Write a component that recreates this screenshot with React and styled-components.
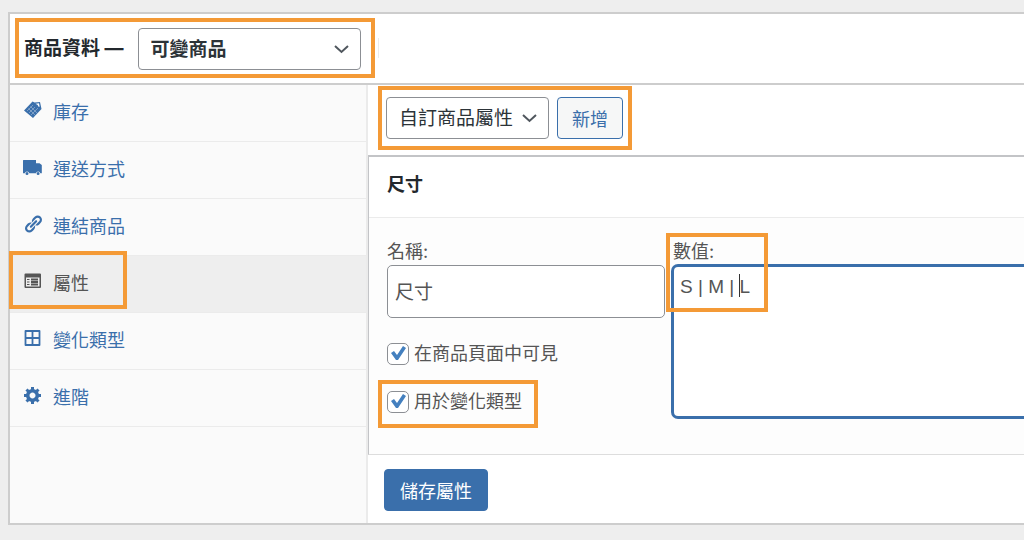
import React, { useState } from "react";
import styled, { createGlobalStyle } from "styled-components";

const COLORS = {
  page: "#eeeeee",
  border: "#cdcdcd",
  line: "#ebebeb",
  blue: "#3a6fab",
  text: "#2c3338",
  muted: "#555555",
  mark: "#f49a36",
};

const GlobalStyle = createGlobalStyle`
  * {
    box-sizing: border-box;
  }
  body {
    margin: 0;
    background-color: ${COLORS.page};
    color: ${COLORS.text};
    font-family: Inter, "Noto Sans CJK TC", sans-serif;
    font-size: 18px;
    line-height: 24px;
    overflow-x: hidden;
  }
  input, select, textarea, button {
    font-family: inherit;
    margin: 0;
  }
`;

const Page = styled.main`
  padding: 12px 0 16px 8px;
`;

const Panel = styled.section`
  border: 2px solid ${COLORS.border};
  border-right: none;
  background-color: #ffffff;
`;

const Header = styled.header`
  display: flex;
  align-items: center;
  gap: 3px;
  padding: 4px 5px 5px;
  border-bottom: 2px solid ${COLORS.border};
`;

const Divider = styled.span`
  width: 1px;
  height: 20px;
  background-color: ${COLORS.line};
`;

const Highlight = styled.div`
  display: flex;
  align-items: center;
  gap: ${(props) => props.$gap || "0"};
  padding: ${(props) => props.$pad};
  border: 4px solid ${COLORS.mark};
`;

// frame drawn over the content, takes no space
const Frame = styled.span`
  position: absolute;
  inset: ${(props) => props.$inset};
  width: ${(props) => props.$width};
  height: ${(props) => props.$height};
  border: 4px solid ${COLORS.mark};
  pointer-events: none;
`;

const TypeLabel = styled.label`
  font-size: 19px;
  font-weight: bold;
  color: #23282d;
  white-space: nowrap;
`;

const SelectBox = styled.div`
  position: relative;
  width: ${(props) => props.$width};
`;

const Select = styled.select`
  appearance: none;
  display: block;
  width: 100%;
  height: 42px;
  padding: 0 12px;
  border: 1px solid #8c8f94;
  border-radius: 4px;
  background-color: #ffffff;
  color: ${COLORS.text};
  font-size: 19px;
  font-weight: ${(props) => (props.$bold ? "bold" : "normal")};
`;

const Chevron = styled.svg`
  position: absolute;
  top: 16px;
  right: 12px;
  width: 15px;
  height: 10px;
  pointer-events: none;
`;

const Body = styled.div`
  display: grid;
  grid-template-columns: 358px minmax(0, 1fr);
`;

const Sidebar = styled.nav`
  background-color: #fafafa;
  border-right: 2px solid ${COLORS.line};
`;

const TabList = styled.ul`
  list-style: none;
  margin: 0;
  padding: 0;
`;

const Tab = styled.li`
  position: relative;
`;

const TabLink = styled.a`
  display: flex;
  align-items: center;
  gap: 10px;
  height: 57px;
  padding: 0 13px;
  border-bottom: 1px solid ${COLORS.line};
  background-color: ${(props) => (props.$active ? "#eeeeee" : "transparent")};
  color: ${(props) => (props.$active ? COLORS.muted : COLORS.blue)};
  text-decoration: none;
`;

const Icon = styled.svg`
  width: 20px;
  height: 20px;
  margin-bottom: 6px;
  flex: none;
`;

const Toolbar = styled.div`
  display: flex;
  padding: 1px 10px 5px;
`;

const AddButton = styled.button`
  height: 42px;
  padding: 0 14px;
  border: 1px solid ${COLORS.blue};
  border-radius: 4px;
  background-color: #f6f7f7;
  color: ${COLORS.blue};
  font-size: 18px;
`;

const Attribute = styled.section`
  border-top: 2px solid #c3c4c7;
  border-left: 1px solid #c3c4c7;
  border-bottom: 1px solid #dddddd;
  background-color: #fdfdfd;
`;

const Title = styled.h3`
  margin: 0;
  padding: 16px 18px 20px;
  border-bottom: 1px solid ${COLORS.line};
  background-color: #ffffff;
  color: #23282d;
  font-size: 18px;
  line-height: 24px;
`;

const Fields = styled.div`
  display: grid;
  grid-template-columns: 278px minmax(0, 1fr);
  gap: 6px;
  padding: 22px 0 17px 18px;
  color: ${COLORS.muted};
`;

const Column = styled.div`
  position: relative;
  display: flex;
  flex-direction: column;
`;

const NameInput = styled.input`
  width: 100%;
  height: 53px;
  margin: 1px 0 23px;
  padding: 0 7px 3px;
  border: 1px solid #8c8f94;
  border-radius: 5px;
  background-color: #ffffff;
  color: ${COLORS.muted};
  font-size: 19px;
`;

const ValueLabel = styled.label`
  padding-left: 2px;
`;

const ValueInput = styled.textarea`
  display: block;
  width: 100%;
  height: 155px;
  padding: 8px 6px;
  border: 3px solid ${COLORS.blue};
  border-right: none;
  border-radius: 7px 0 0 7px;
  outline: none;
  resize: none;
  background-color: #ffffff;
  color: ${COLORS.muted};
  font-family: "Liberation Sans", "Noto Sans CJK TC", sans-serif;
  font-size: 19px;
  line-height: 24px;
`;

const Caret = styled.span`
  position: absolute;
  top: 34px;
  left: 68px;
  width: 1px;
  height: 23px;
  background-color: #333333;
`;

const CheckRow = styled.label`
  position: relative;
  display: flex;
  align-items: center;
  gap: 5px;
  height: 26px;
  margin-bottom: 22px;
`;

const Checkbox = styled.input`
  appearance: none;
  width: 22px;
  height: 22px;
  border: 1px solid #8c8f94;
  border-radius: 5px;
  background-color: #ffffff;
`;

const Tick = styled.svg`
  position: absolute;
  top: 4px;
  left: 3px;
  width: 17px;
  height: 17px;
  pointer-events: none;
`;

const Footer = styled.footer`
  padding: 14px 16px 12px;
`;

const SaveButton = styled.button`
  height: 42px;
  padding: 0 15px;
  border: 1px solid ${COLORS.blue};
  border-radius: 4px;
  background-color: ${COLORS.blue};
  color: #ffffff;
  font-size: 18px;
`;

const ICONS = {
  stock: (
    <>
      <path d="M1 10.500 9.500 1.500l2 1 5.500-.5 1.500 7-8.500 9z" fill="currentColor" />
      <path
        d="m4 11 6-6M6 13l6-6M8 15l7-7M5.500 8.500l7 7M7.500 6.500l7 7"
        stroke="#fafafa"
        strokeWidth=".35"
      />
      <path d="M12.500 3.800l3.500-.5.700 3.500-1.500-.3-.5-1.500z" fill="#fafafa" />
    </>
  ),
  shipping: (
    <path
      d="M0 3.500Q0 3 .500 3H13v3.200h3.500l2.300 1.800v8.300h-1.400a2.300 2.300 0 0 0-4.500 0H6.300a2.300 2.300 0 0 0-4.500 0H0zM4 15a1.500 1.500 0 1 1 0 3 1.500 1.500 0 0 1 0-3zm11.100 0a1.500 1.500 0 1 1 0 3 1.500 1.500 0 0 1 0-3z"
      fill="currentColor"
    />
  ),
  linked: (
    <path
      d="M17.740 2.760c1.680 1.690 1.680 4.410 0 6.100l-1.530 1.520c-1.120 1.120-2.700 1.470-4.140 1.090l2.620-2.610.760-.770.760-.760c.840-.840.840-2.200 0-3.040-.840-.850-2.200-.850-3.040 0l-.770.760-3.380 3.380c-.370-1.440-.020-3.020 1.100-4.140l1.520-1.530c1.690-1.680 4.420-1.680 6.100 0zM8.590 13.430l5.340-5.340c.420-.420.420-1.100 0-1.520-.440-.430-1.130-.390-1.530 0l-5.330 5.340c-.420.420-.420 1.100 0 1.520.440.430 1.130.390 1.520 0zm-.760 2.290l4.140-4.150c.380 1.440.030 3.020-1.090 4.140l-1.520 1.530c-1.690 1.680-4.410 1.680-6.100 0-1.680-1.680-1.680-4.420 0-6.100l1.530-1.520c1.120-1.120 2.700-1.470 4.140-1.100l-4.140 4.150c-.850.840-.850 2.200 0 3.050.840.840 2.200.840 3.040 0z"
      fill="currentColor"
    />
  ),
  attribute: (
    <>
      <path
        d="M1.500 3.500q0-1 1-1h14.500q1 0 1 1v12.500q0 1-1 1H2.500q-1 0-1-1zM3 6.500v9h13.500v-9z"
        fill="currentColor"
        fillRule="evenodd"
      />
      <path
        d="M8 8.500h7M8 11h7M8 13.500h7"
        stroke="currentColor"
        strokeWidth="1.800"
      />
      <path d="M4 8.500h2.500M4 11h2.500M4 13.500h2.500" stroke="currentColor" strokeWidth="1" />
    </>
  ),
  variation: (
    <path
      d="M2.500 3h14v14h-14zM9.500 3v14M2.500 10h14"
      fill="none"
      stroke="currentColor"
      strokeWidth="1.800"
      strokeLinejoin="round"
    />
  ),
  advanced: (
    <path
      d="M18 12h-2.180c-.170.700-.440 1.350-.810 1.930l1.540 1.540-2.100 2.100-1.540-1.540c-.580.360-1.230.630-1.910.790V19H8v-2.180c-.680-.160-1.330-.430-1.910-.790l-1.540 1.540-2.120-2.120 1.540-1.540c-.360-.580-.630-1.230-.790-1.910H1V9.030h2.170c.160-.700.440-1.350.800-1.940L2.430 5.550l2.100-2.100 1.540 1.540c.580-.370 1.240-.640 1.930-.810V2h3v2.180c.680.160 1.330.430 1.910.790l1.540-1.540 2.120 2.120-1.540 1.540c.360.590.640 1.240.800 1.940H18V12zm-8.500 1.500c1.660 0 3-1.340 3-3s-1.340-3-3-3-3 1.340-3 3 1.340 3 3 3z"
      fill="currentColor"
    />
  ),
};

const TABS = [
  { id: "stock", label: "庫存" },
  { id: "shipping", label: "運送方式" },
  { id: "linked", label: "連結商品" },
  { id: "attribute", label: "屬性", marked: true },
  { id: "variation", label: "變化類型" },
  { id: "advanced", label: "進階" },
];

function Dropdown({ id, width, bold, label, options }) {
  return (
    <SelectBox $width={width}>
      <Select id={id} $bold={bold} aria-label={label}>
        {options.map((option) => (
          <option key={option}>{option}</option>
        ))}
      </Select>
      <Chevron viewBox="0 0 15 10">
        <path
          d="M1 2l6.500 6L14 2"
          fill="none"
          stroke="#50575e"
          strokeWidth="2"
        />
      </Chevron>
    </SelectBox>
  );
}

function Check({ label, marked }) {
  const [checked, setChecked] = useState(true);

  return (
    <CheckRow>
      <Checkbox
        type="checkbox"
        checked={checked}
        onChange={() => setChecked(!checked)}
      />
      {checked && (
        <Tick viewBox="0 0 17 17">
          <path d="M1 8l3-2 3 4 6-9 3 2-8 12H6z" fill="#4480bf" />
        </Tick>
      )}
      {label}
      {marked && (
        <Frame $inset="-9px auto auto -9px" $width="160px" $height="48px" />
      )}
    </CheckRow>
  );
}

function App() {
  const [active, setActive] = useState("attribute");

  return (
    <>
      <GlobalStyle />
      <Page>
        <Panel>
          <Header>
            <Highlight $gap="14px" $pad="6px 10px 4px 5px">
              <TypeLabel htmlFor="product-type">商品資料 —</TypeLabel>
              <Dropdown
                id="product-type"
                width="223px"
                bold
                options={["可變商品"]}
              />
            </Highlight>
            <Divider />
          </Header>
          <Body>
            <Sidebar>
              <TabList>
                {TABS.map((tab) => (
                  <Tab key={tab.id}>
                    <TabLink
                      href={`#${tab.id}`}
                      $active={active === tab.id}
                      onClick={() => setActive(tab.id)}
                    >
                      <Icon viewBox="0 0 20 20">{ICONS[tab.id]}</Icon>
                      {tab.label}
                    </TabLink>
                    {tab.marked && (
                      <Frame
                        $inset="-5px auto auto -1px"
                        $width="118px"
                        $height="58px"
                      />
                    )}
                  </Tab>
                ))}
              </TabList>
            </Sidebar>
            <div>
              <Toolbar>
                <Highlight $gap="8px" $pad="7px 5px 7px 4px">
                  <Dropdown
                    id="attribute-type"
                    width="163px"
                    label="自訂商品屬性"
                    options={["自訂商品屬性"]}
                  />
                  <AddButton type="button">新增</AddButton>
                </Highlight>
              </Toolbar>
              <Attribute>
                <Title>尺寸</Title>
                <Fields>
                  <Column>
                    <label htmlFor="attribute-name">名稱:</label>
                    <NameInput id="attribute-name" defaultValue="尺寸" />
                    <Check label="在商品頁面中可見" />
                    <Check label="用於變化類型" marked />
                  </Column>
                  <Column>
                    <ValueLabel htmlFor="attribute-values">數值:</ValueLabel>
                    <ValueInput id="attribute-values" defaultValue="S | M | L" />
                    <Caret />
                    <Frame
                      $inset="-7px auto auto -5px"
                      $width="102px"
                      $height="79px"
                    />
                  </Column>
                </Fields>
              </Attribute>
              <Footer>
                <SaveButton type="button">儲存屬性</SaveButton>
              </Footer>
            </div>
          </Body>
        </Panel>
      </Page>
    </>
  );
}

export default App;
